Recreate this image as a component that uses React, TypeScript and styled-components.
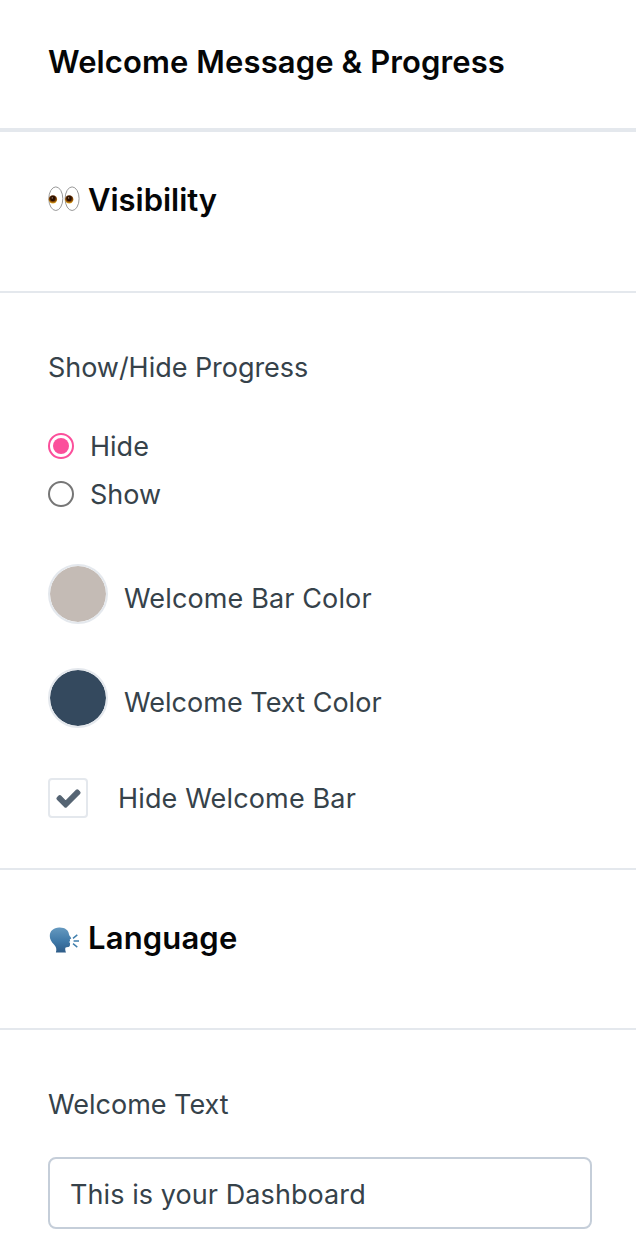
import React, { useState } from "react";
import styled, { createGlobalStyle } from "styled-components";
import { FaCheck } from "react-icons/fa";

const GlobalStyle = createGlobalStyle`
  *, *::before, *::after { box-sizing: border-box; }
  body {
    margin: 0;
    background: #fff;
    color: #36424a;
    font-family: Inter, "Liberation Sans", sans-serif;
    -webkit-font-smoothing: antialiased;
  }
`;

const Panel = styled.main`
  width: 100%;
  height: 1246px;
  overflow: hidden;
  background: #fff;
`;

const PanelHeader = styled.header`
  height: 132px;
  padding: 38px 48px 0;
  border-bottom: 4px solid #e4e8ed;
`;

const Title = styled.h1`
  margin: 0;
  font-size: 31px;
  line-height: 48px;
  font-weight: 600;
  letter-spacing: 0.11px;
  color: #050607;
  white-space: nowrap;
`;

const SectionHeader = styled.header<{ $height: number }>`
  display: flex;
  align-items: flex-start;
  gap: 8px;
  height: ${(p) => p.$height}px;
  padding: 44px 48px 0;
  border-bottom: 2px solid #e4e8ed;
`;

const SectionTitle = styled(Title).attrs({ as: "h2" })<{ $tracking: number }>`
  letter-spacing: ${(p) => p.$tracking}px;
`;

const SectionIcon = styled.svg`
  flex: none;
  width: 32px;
  height: 48px;
`;

const VisibilityBody = styled.div`
  height: 577px;
  padding: 49px 48px 0;
  border-bottom: 2px solid #e4e8ed;
`;

const LanguageBody = styled.div`
  padding: 49px 44px 0 48px;
`;

const Label = styled.div<{ $tracking?: number }>`
  padding-top: 2px;
  font-size: 27px;
  line-height: 48px;
  letter-spacing: ${(p) => p.$tracking ?? 0}px;
  white-space: nowrap;
`;

const RadioGroup = styled.div`
  margin-top: 30px;
`;

const RadioRow = styled.label`
  display: flex;
  align-items: center;
  gap: 16px;
  height: 48px;
`;

const Radio = styled.input.attrs({ type: "radio" })`
  appearance: none;
  flex: none;
  display: grid;
  place-items: center;
  width: 26px;
  height: 26px;
  margin: 0;
  border: 2px solid #767676;
  border-radius: 50%;
  background: #fff;

  &:checked { border-color: #fb4f9b; }
  &:checked::before {
    content: "";
    width: 16px;
    height: 16px;
    border-radius: 50%;
    background: #fb4f9b;
  }
`;

const SwatchList = styled.div`
  display: grid;
  gap: 44px;
  margin-top: 46px;
`;

const SwatchRow = styled.div`
  display: flex;
  align-items: center;
  gap: 16px;
  height: 60px;

  ${Label} { padding-top: 9px; }
`;

const Swatch = styled.button<{ $color: string }>`
  flex: none;
  width: 60px;
  height: 60px;
  padding: 0;
  border: 2px solid #e4e8ed;
  border-radius: 50%;
  background: ${(p) => p.$color};
  background-clip: padding-box;
`;

const CheckRow = styled.label`
  display: flex;
  align-items: center;
  gap: 30px;
  height: 40px;
  margin-top: 50px;
`;

const CheckBox = styled.button`
  flex: none;
  display: grid;
  place-items: center;
  width: 40px;
  height: 40px;
  padding: 0;
  border: 2px solid #e4e8ed;
  border-radius: 4px;
  background: #fff;
`;

const CheckMark = styled(FaCheck)`
  width: 23px;
  height: 23px;
  overflow: visible;
  color: #556473;
  stroke-width: 26px;
  stroke-linejoin: round;
`;

const TextInput = styled.input`
  display: block;
  width: 100%;
  height: 72px;
  margin-top: 28px;
  padding: 2px 20px 0;
  border: 2px solid #c5ced9;
  border-radius: 8px;
  outline: none;
  color: #36424a;
  background: #fff;
  font: 400 27px/48px Inter, "Liberation Sans", sans-serif;
  letter-spacing: 0.08px;
`;

const EyesIcon = () => (
  <SectionIcon viewBox="0 0 32 48" aria-hidden="true">
    <defs>
      <radialGradient id="iris" cx="50%" cy="34%" r="66%">
        <stop offset="0.35" stopColor="#351400" />
        <stop offset="0.62" stopColor="#7a3d03" />
        <stop offset="1" stopColor="#efb321" />
      </radialGradient>
    </defs>
    {[0, 16.3].map((x) => (
      <g key={x} transform={`translate(${x} 0)`}>
        <ellipse cx="7.8" cy="22.7" rx="7" ry="11.8" fill="#fff" stroke="#999" strokeWidth="1" />
        <circle cx="4.9" cy="23.4" r="4.2" fill="url(#iris)" />
        <circle cx="4.7" cy="22.7" r="2.4" fill="#291000" />
        <circle cx="4.3" cy="21.9" r="0.7" fill="#b8947c" />
      </g>
    ))}
  </SectionIcon>
);

const SpeakingIcon = () => (
  <SectionIcon viewBox="0 -1.6 32 48" aria-hidden="true">
    <defs>
      <linearGradient id="head" x1="0" y1="0" x2="0" y2="1">
        <stop offset="0" stopColor="#6599bf" />
        <stop offset="0.55" stopColor="#3f79a8" />
        <stop offset="1" stopColor="#2e5c88" />
      </linearGradient>
    </defs>
    <path
      d="M11.2 12C17 11.8 20.4 14.6 21 18.8C21.1 20 23.2 21.9 23.2 22.7C23.2 23.4 21.7 23.5 21.8 24.1L22.2 25.6L20.7 26.5L22.1 27.1L21.9 29.8C21.5 31.8 18.2 31.3 17.6 32C17 32.8 17.1 34.8 18 37H7.9C9 33.6 8.1 31.3 6 29C3.2 26.2 1.8 23.4 1.8 20.4C1.8 15.4 5.5 12.2 11.2 12Z"
      fill="url(#head)"
    />
    <path d="M25 22.8L29.3 19.3M25.6 25.4H31M25 28L29.3 31.5" fill="none" stroke="#3f7eac" strokeWidth="1.4" />
  </SectionIcon>
);

const SWATCHES = [
  { label: "Welcome Bar Color", color: "#c4bbb5", tracking: 0.13 },
  { label: "Welcome Text Color", color: "#34495e", tracking: 0.03 },
];

export default function App() {
  const [progress, setProgress] = useState("Hide");
  const [hideBar, setHideBar] = useState(true);
  const [text, setText] = useState("This is your Dashboard");

  return (
    <>
      <GlobalStyle />
      <Panel>
        <PanelHeader>
          <Title>Welcome Message &amp; Progress</Title>
        </PanelHeader>

        <SectionHeader $height={161}>
          <EyesIcon />
          <SectionTitle $tracking={-0.03}>Visibility</SectionTitle>
        </SectionHeader>
        <VisibilityBody>
          <Label $tracking={-0.04}>Show/Hide Progress</Label>
          <RadioGroup>
            {["Hide", "Show"].map((option) => (
              <RadioRow key={option}>
                <Radio name="progress" checked={progress === option} onChange={() => setProgress(option)} />
                <Label>{option}</Label>
              </RadioRow>
            ))}
          </RadioGroup>
          <SwatchList>
            {SWATCHES.map(({ label, color, tracking }) => (
              <SwatchRow key={label}>
                <Swatch $color={color} aria-label={label} />
                <Label $tracking={tracking}>{label}</Label>
              </SwatchRow>
            ))}
          </SwatchList>
          <CheckRow>
            <CheckBox role="checkbox" aria-checked={hideBar} onClick={() => setHideBar(!hideBar)}>
              {hideBar && <CheckMark stroke="currentColor" />}
            </CheckBox>
            <Label $tracking={0.15}>Hide Welcome Bar</Label>
          </CheckRow>
        </VisibilityBody>

        <SectionHeader $height={160}>
          <SpeakingIcon />
          <SectionTitle $tracking={0.15}>Language</SectionTitle>
        </SectionHeader>
        <LanguageBody>
          <Label>Welcome Text</Label>
          <TextInput aria-label="Welcome Text" value={text} onChange={(e) => setText(e.target.value)} />
        </LanguageBody>
      </Panel>
    </>
  );
}
